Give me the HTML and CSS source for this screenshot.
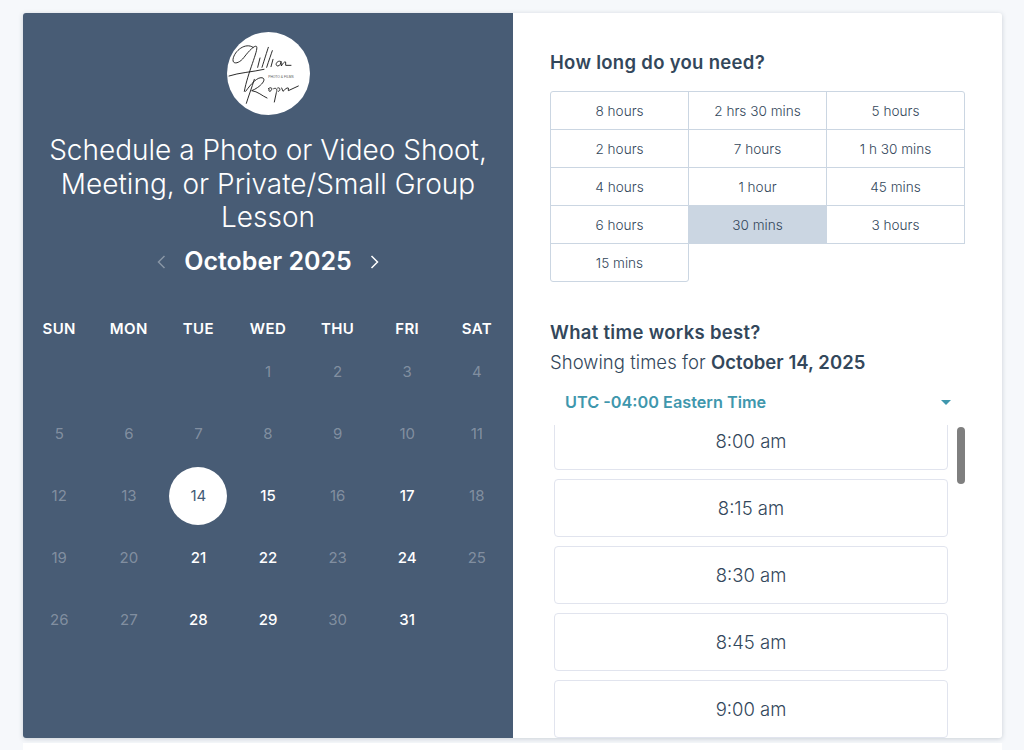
FILE: index.html
```html
<!DOCTYPE html>
<html lang="en">
  <head>
    <meta charset="UTF-8" />
    <meta name="viewport" content="width=device-width, initial-scale=1.0" />
    <title>Schedule a Photo or Video Shoot</title>
    <link rel="stylesheet" href="styles.css">
  </head>
  <body>
    <div class="card">
      <section class="left">
        <svg class="logo" viewBox="44 28 249 249" role="img" aria-label="Jillian Regan logo">
          <circle cx="168.5" cy="152.5" r="124.5" fill="#fff" />
          <g fill="none" stroke="#1c1c1c" stroke-width="2.8" stroke-linecap="round">
            <path d="M122 74C100 58 66 84 62 110C60 126 80 124 95 104C112 82 128 66 133 72C138 84 106 150 96 206" />
            <path d="M50 160C80 150 120 148 155 140" />
            <path d="M136 134L143 106M149 134C156 112 164 86 168 74M163 134C170 112 176 96 180 84M176 132L182 110" />
            <path d="M204 116C194 112 186 128 196 130C204 130 206 120 206 116L207 130C212 122 216 116 220 118L220 128L236 128" />
            <path d="M100 206C116 184 136 160 152 166C164 174 136 198 118 204C136 206 150 220 164 226" />
            <path d="M126 170C118 196 108 222 102 242" />
            <path d="M168 198C176 192 182 196 176 204C172 208 168 206 170 200M184 198C192 194 196 200 192 210L186 238M196 196C206 192 204 208 198 206M208 196L212 206C218 200 224 194 228 196L228 204L258 190" />
          </g>
          <text class="logo-tag" x="206" y="165" text-anchor="middle">PHOTO &amp; FILMS</text>
        </svg>
        <h1 class="title">Schedule a Photo or Video Shoot, Meeting, or Private/Small Group Lesson</h1>
        <div class="month">
          <svg class="chev chev-off" viewBox="0 0 9 14"><path d="M7.5 1L1.5 7l6 6" /></svg>
          <span class="month-name">October 2025</span>
          <svg class="chev" viewBox="0 0 9 14"><path d="M1.5 1l6 6-6 6" /></svg>
        </div>
        <div class="cal">
          <div class="dow">SUN</div><div class="dow">MON</div><div class="dow">TUE</div><div class="dow">WED</div><div class="dow">THU</div><div class="dow">FRI</div><div class="dow">SAT</div>
          <div class="day"></div><div class="day"></div><div class="day"></div><div class="day">1</div><div class="day">2</div><div class="day">3</div><div class="day">4</div>
          <div class="day">5</div><div class="day">6</div><div class="day">7</div><div class="day">8</div><div class="day">9</div><div class="day">10</div><div class="day">11</div>
          <div class="day">12</div><div class="day">13</div><div class="day"><span class="today">14</span></div><div class="day open">15</div><div class="day">16</div><div class="day open">17</div><div class="day">18</div>
          <div class="day">19</div><div class="day">20</div><div class="day open">21</div><div class="day open">22</div><div class="day">23</div><div class="day open">24</div><div class="day">25</div>
          <div class="day">26</div><div class="day">27</div><div class="day open">28</div><div class="day open">29</div><div class="day">30</div><div class="day open">31</div><div class="day"></div>
        </div>
      </section>
      <section class="right">
        <h2 class="heading">How long do you need?</h2>
        <div class="durations">
          <div class="dur first">8 hours</div>
          <div class="dur">2 hrs 30 mins</div>
          <div class="dur third">5 hours</div>
          <div class="dur">2 hours</div>
          <div class="dur">7 hours</div>
          <div class="dur">1 h 30 mins</div>
          <div class="dur">4 hours</div>
          <div class="dur">1 hour</div>
          <div class="dur">45 mins</div>
          <div class="dur">6 hours</div>
          <div class="dur selected">30 mins</div>
          <div class="dur">3 hours</div>
          <div class="dur last">15 mins</div>
        </div>
        <h2 class="heading heading-time">What time works best?</h2>
        <p class="showing">Showing times for <b>October 14, 2025</b></p>
        <div class="tz">
          <span>UTC -04:00 Eastern Time</span>
          <i class="caret"></i>
        </div>
        <div class="times">
          <div class="time">8:00 am</div>
          <div class="time">8:15 am</div>
          <div class="time">8:30 am</div>
          <div class="time">8:45 am</div>
          <div class="time">9:00 am</div>
          <div class="thumb"></div>
        </div>
      </section>
    </div>
    <div class="strip"></div>
  </body>
</html>
```

FILE: styles.css
```css
html, body {
  height: 100%;
}
body {
  margin: 0;
  overflow: hidden;
  background-color: #f6f8fb;
  font-family: "Inter", "Open Sans", sans-serif;
  color: #33475b;
}
.card {
  display: flex;
  height: 725px;
  margin: 13px 22px 0 23px;
  border-radius: 3px;
  background-color: white;
  box-shadow: 0 1px 5px rgba(45, 62, 80, 0.22);
  overflow: hidden;
}
.strip {
  height: 20px;
  margin: 5px 22px 0 23px;
  background-color: white;
}

/* left side */
.left {
  display: flex;
  flex-direction: column;
  align-items: center;
  width: 490px;
  padding-top: 19px;
  background-color: #485c75;
  color: white;
}
.logo {
  display: block;
  width: 83px;
  height: 83px;
}
.logo-tag {
  font-size: 10px;
  font-family: "Liberation Sans", sans-serif;
  fill: #555;
}
.title {
  width: 460px;
  margin: 19px 0 0;
  font-size: 28px;
  font-weight: 300;
  line-height: 33.5px;
  text-align: center;
}
.month {
  display: flex;
  align-items: center;
  gap: 18px;
  height: 34px;
  margin-top: 9px;
}
.month-name {
  font-size: 25px;
  font-weight: 600;
}
.chev {
  width: 9px;
  height: 14px;
  margin-top: 3px;
}
.chev path {
  fill: none;
  stroke: white;
  stroke-width: 1.5;
}
.chev-off {
  opacity: 0.35;
}
.cal {
  display: grid;
  grid-template-columns: repeat(7, 69.6px);
  grid-template-rows: 24px;
  grid-auto-rows: 62px;
  margin-top: 39px;
  text-align: center;
}
.dow,
.day {
  display: flex;
  align-items: center;
  justify-content: center;
}
.dow {
  font-size: 15px;
  font-weight: 600;
  letter-spacing: 0.4px;
}
.day {
  font-size: 15px;
  color: rgba(255, 255, 255, 0.33);
}
.open {
  color: white;
  font-weight: 500;
}
.today {
  display: flex;
  align-items: center;
  justify-content: center;
  width: 58px;
  height: 58px;
  border-radius: 50%;
  background-color: white;
  color: #425b76;
}

/* right side */
.right {
  display: flex;
  flex-direction: column;
  flex: 1;
  min-width: 0;
  padding-left: 37px;
}
.heading {
  margin: 37px 0 0;
  font-size: 18.5px;
  line-height: 24px;
  font-weight: 600;
  letter-spacing: 0.3px;
}
.durations {
  display: grid;
  grid-template-columns: 138px 138px 138px;
  grid-auto-rows: 38px;
  width: 415px;
  margin-top: 17px;
}
.dur {
  display: flex;
  align-items: center;
  justify-content: center;
  margin: 0 -1px -1px 0;
  border: 1px solid #cbd6e2;
  font-size: 13.6px;
  font-weight: 300;
  color: #33475b;
}
.first {
  border-top-left-radius: 3px;
}
.third {
  border-top-right-radius: 3px;
}
.last {
  border-bottom-left-radius: 3px;
  border-bottom-right-radius: 3px;
}
.selected {
  background-color: #cbd6e2;
}
.heading-time {
  margin-top: 39px;
}
.showing {
  margin: 6px 0 0;
  font-size: 18.5px;
  line-height: 24px;
  font-weight: 300;
  letter-spacing: 0.05px;
}
.showing b {
  font-weight: 600;
}
.tz {
  display: flex;
  align-items: center;
  justify-content: space-between;
  width: 386px;
  height: 26px;
  margin: 15px 0 0 15px;
  font-size: 16.25px;
  font-weight: 600;
  color: #3f97ad;
}
.caret {
  width: 0;
  height: 0;
  border-left: 5px solid transparent;
  border-right: 5px solid transparent;
  border-top: 5px solid #3f97ad;
}
.times {
  position: relative;
  flex: 1;
  min-height: 0;
  margin-top: 10px;
  padding-left: 4px;
  overflow: hidden;
}
.time {
  display: flex;
  align-items: center;
  justify-content: center;
  box-sizing: border-box;
  width: 394px;
  height: 58px;
  margin-bottom: 9px;
  border: 1px solid #e1e4ee;
  border-radius: 4px;
  font-size: 18.5px;
  font-weight: 300;
  color: #33475b;
}
.time:first-child {
  margin-top: -13px;
}
.thumb {
  position: absolute;
  top: 2px;
  left: 407px;
  width: 8px;
  height: 57px;
  border-radius: 4px;
  background-color: #7f7f7f;
}
```
